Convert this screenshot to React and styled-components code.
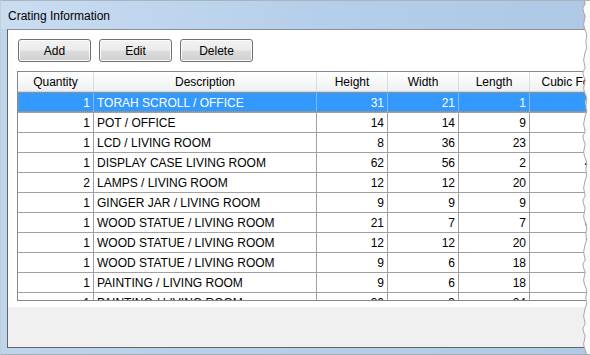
import React from "react";
import styled, { createGlobalStyle } from "styled-components";

const GlobalStyle = createGlobalStyle`
  html, body { margin: 0; padding: 0; background: #ffffff; }
  body { font-family: "Liberation Sans", Arial, sans-serif; }
  * { box-sizing: border-box; }
`;

const COLS = "76px 223px 71px 71px 71px 82px";

const Window = styled.div`
  position: relative;
  width: 590px;
  height: 355px;
  display: flex;
  flex-direction: column;
  overflow: hidden;
  background: linear-gradient(to right, #bed4ec, #b6cee9 50%, #afc9e6);
  border-top: 1px solid #a9b4c0;
  border-left: 1px solid #c4ccd4;
  border-bottom: 1px solid #a3adb8;
`;

const TitleBar = styled.div`
  height: 28px;
  flex: none;
  display: flex;
  align-items: center;
  padding-left: 7px;
  background: linear-gradient(100deg, #cadcf0 0%, #c0d6ee 25%, #b5cee9 55%, #aec8e5 100%);
`;

const Title = styled.span`
  font-family: "Liberation Sans", Arial, sans-serif;
  font-size: 12px;
  color: #000;
  padding-top: 2px;
`;

const FrameBody = styled.div`
  flex: 1;
  display: flex;
  padding: 0 0 6px 6px;
`;

const Panel = styled.div`
  flex: 1;
  display: flex;
  flex-direction: column;
  border-top: 1px solid #8a8f96;
  border-left: 1px solid #646464;
  border-bottom: 1px solid #646464;
  overflow: hidden;
`;

const Content = styled.div`
  height: 277px;
  flex: none;
  background: #ffffff;
  padding: 9px 0 6px 9px;
  display: flex;
  flex-direction: column;
`;

const Toolbar = styled.div`
  display: flex;
  gap: 8px;
  padding-left: 1px;
  margin-bottom: 9px;
`;

const Button = styled.button`
  width: 73px;
  height: 23px;
  padding: 0;
  font-family: "Liberation Sans", Arial, sans-serif;
  font-size: 12px;
  color: #000;
  border: 1px solid #707070;
  border-radius: 3px;
  background: linear-gradient(#f2f2f2 0%, #ebebeb 48%, #dddddd 52%, #cfcfcf 100%);
  box-shadow: inset 0 0 0 1px #fbfbfb;
`;

const Table = styled.div`
  height: 230px;
  width: 596px;
  border: 1px solid #828790;
  border-right: none;
  overflow: hidden;
  font-family: "Liberation Sans", Arial, sans-serif;
  font-size: 12px;
`;

const HeaderRow = styled.div`
  display: grid;
  grid-template-columns: ${COLS};
  height: 20px;
  border-bottom: 1px solid #d5d5d5;
  background: linear-gradient(#ffffff 0%, #f7f8f9 50%, #eff0f2 100%);
`;

const HeaderCell = styled.div`
  display: flex;
  align-items: center;
  justify-content: center;
  border-right: 1px solid #dcdcdc;
  color: #000;
  white-space: nowrap;
  padding-top: 1px;
`;

const Row = styled.div`
  display: grid;
  grid-template-columns: ${COLS};
  height: 20px;
  border-top: 1px solid ${(p) => (p.$selected ? "#3399ff" : "#a0a0a0")};
  background: ${(p) => (p.$selected ? "#3399ff" : "#ffffff")};
  color: ${(p) => (p.$selected ? "#ffffff" : "#000000")};
  outline: ${(p) => (p.$selected ? "1px dotted #d9913a" : "none")};
  outline-offset: -1px;
`;

const Cell = styled.div`
  display: flex;
  align-items: center;
  justify-content: ${(p) => (p.$num ? "flex-end" : "flex-start")};
  padding: ${(p) => (p.$num ? "0 3px 0 0" : "0 0 0 3px")};
  border-right: 1px solid ${(p) => (p.$selected ? "#7db9f7" : "#a0a0a0")};
  white-space: nowrap;
  overflow: hidden;
`;

const Footer = styled.div`
  flex: 1;
  background: #f0f0f0;
`;

const Torn = styled.svg`
  position: absolute;
  top: -1px;
  right: 0;
  width: 9px;
  height: 357px;
`;

const rows = [
  [1, "TORAH SCROLL / OFFICE", 31, 21, 1],
  [1, "POT / OFFICE", 14, 14, 9],
  [1, "LCD / LIVING ROOM", 8, 36, 23],
  [1, "DISPLAY CASE LIVING ROOM", 62, 56, 2],
  [2, "LAMPS / LIVING ROOM", 12, 12, 20],
  [1, "GINGER JAR / LIVING ROOM", 9, 9, 9],
  [1, "WOOD STATUE / LIVING ROOM", 21, 7, 7],
  [1, "WOOD STATUE / LIVING ROOM", 12, 12, 20],
  [1, "WOOD STATUE / LIVING ROOM", 9, 6, 18],
  [1, "PAINTING / LIVING ROOM", 9, 6, 18],
  [1, "PAINTING / LIVING ROOM", 30, 3, 24],
];

const cubic = (q, h, w, l) => ((q * h * w * l) / 1728).toFixed(2);

function tornPoints() {
  const pts = [];
  const offs = [3, 5, 2, 4, 6, 3, 1, 4, 5, 2, 3, 6, 4, 2, 5, 3];
  let i = 0;
  for (let y = 0; y <= 357; y += 4) {
    pts.push(`${offs[i % offs.length] * 0.8 + 1},${y}`);
    i += 3;
  }
  return pts;
}

export default function App() {
  const pts = tornPoints();
  const poly = [...pts, "9,357", "9,0"].join(" ");
  return (
    <>
      <GlobalStyle />
      <Window>
        <TitleBar>
          <Title>Crating Information</Title>
        </TitleBar>
        <FrameBody>
          <Panel>
            <Content>
              <Toolbar>
                <Button>Add</Button>
                <Button>Edit</Button>
                <Button>Delete</Button>
              </Toolbar>
              <Table>
                <HeaderRow>
                  <HeaderCell>Quantity</HeaderCell>
                  <HeaderCell>Description</HeaderCell>
                  <HeaderCell>Height</HeaderCell>
                  <HeaderCell>Width</HeaderCell>
                  <HeaderCell>Length</HeaderCell>
                  <HeaderCell>Cubic Feet</HeaderCell>
                </HeaderRow>
                {rows.map((r, i) => {
                  const sel = i === 0;
                  return (
                    <Row key={i} $selected={sel}>
                      <Cell $num $selected={sel}>{r[0]}</Cell>
                      <Cell $selected={sel}>{r[1]}</Cell>
                      <Cell $num $selected={sel}>{r[2]}</Cell>
                      <Cell $num $selected={sel}>{r[3]}</Cell>
                      <Cell $num $selected={sel}>{r[4]}</Cell>
                      <Cell $num $selected={sel}>{cubic(r[0], r[2], r[3], r[4])}</Cell>
                    </Row>
                  );
                })}
              </Table>
            </Content>
            <Footer />
          </Panel>
        </FrameBody>
        <Torn viewBox="0 0 9 357" preserveAspectRatio="none">
          <polygon points={poly} fill="#fbfbfb" />
          <polyline points={pts.join(" ")} fill="none" stroke="#a8a8a8" strokeWidth="1" />
        </Torn>
      </Window>
    </>
  );
}
